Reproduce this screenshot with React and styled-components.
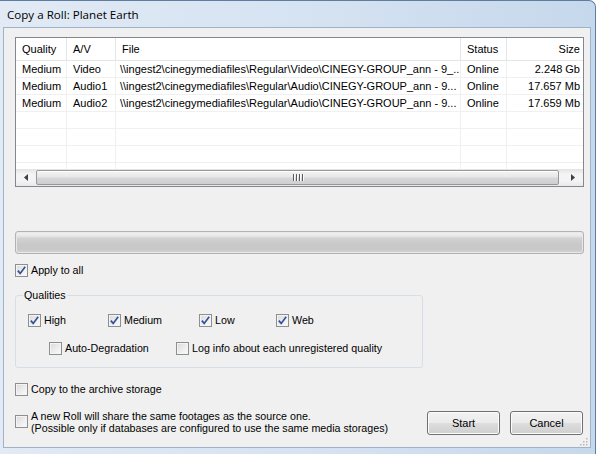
import React from 'react';
import styled, { createGlobalStyle } from 'styled-components';

const GlobalStyle = createGlobalStyle`
  html, body {
    margin: 0;
    padding: 0;
    background: #ffffff;
  }
  body {
    font-family: "Liberation Sans", Arial, sans-serif;
    font-size: 10.7px;
    color: #000;
  }
`;

const files = [
  {
    quality: 'Medium',
    av: 'Video',
    file: '\\\\ingest2\\cinegymediafiles\\Regular\\Video\\CINEGY-GROUP_ann - 9_...',
    status: 'Online',
    size: '2.248 Gb',
  },
  {
    quality: 'Medium',
    av: 'Audio1',
    file: '\\\\ingest2\\cinegymediafiles\\Regular\\Audio\\CINEGY-GROUP_ann - 9...',
    status: 'Online',
    size: '17.657 Mb',
  },
  {
    quality: 'Medium',
    av: 'Audio2',
    file: '\\\\ingest2\\cinegymediafiles\\Regular\\Audio\\CINEGY-GROUP_ann - 9...',
    status: 'Online',
    size: '17.659 Mb',
  },
];

const columns = '51px 49px 345px 46px 76px';

const CheckBox = ({ checked }) => (
  <Box>
    {checked && (
      <svg width="9" height="9" viewBox="0 0 9 9">
        <path
          d="M0.8 4.6 L3.2 7.4 L8.2 0.8"
          fill="none"
          stroke="#33519b"
          strokeWidth="1.7"
        />
      </svg>
    )}
  </Box>
);

const Check = ({ checked, children }) => (
  <CheckRow>
    <CheckBox checked={checked} />
    <CheckLabel>{children}</CheckLabel>
  </CheckRow>
);

const App = () => {
  const emptyRows = [0, 1, 2, 3];

  return (
    <>
      <GlobalStyle />
      <Window>
        <TitleBar>Copy a Roll: Planet Earth</TitleBar>
        <Panel>
          <ListView>
            <HeaderRow>
              <HeadCell>Quality</HeadCell>
              <HeadCell>A/V</HeadCell>
              <HeadCell>File</HeadCell>
              <HeadCell>Status</HeadCell>
              <HeadCell $right>Size</HeadCell>
            </HeaderRow>
            <Body>
              {files.map((f, i) => (
                <Row key={i}>
                  <Cell>{f.quality}</Cell>
                  <Cell>{f.av}</Cell>
                  <Cell>{f.file}</Cell>
                  <Cell>{f.status}</Cell>
                  <Cell $right>{f.size}</Cell>
                </Row>
              ))}
              {emptyRows.map((i) => (
                <Row key={'e' + i}>
                  <Cell />
                  <Cell />
                  <Cell />
                  <Cell />
                  <Cell />
                </Row>
              ))}
            </Body>
            <ScrollBar>
              <ArrowButton>
                <svg width="4" height="7" viewBox="0 0 4 7">
                  <path d="M4 0 L0 3.5 L4 7 Z" fill="#404040" />
                </svg>
              </ArrowButton>
              <Thumb>
                <Grip>
                  <span />
                  <span />
                  <span />
                  <span />
                </Grip>
              </Thumb>
              <ArrowButton>
                <svg width="4" height="7" viewBox="0 0 4 7">
                  <path d="M0 0 L4 3.5 L0 7 Z" fill="#404040" />
                </svg>
              </ArrowButton>
            </ScrollBar>
          </ListView>

          <Progress />

          <ApplyRow>
            <Check checked>Apply to all</Check>
          </ApplyRow>

          <GroupBox>
            <Legend>Qualities</Legend>
            <QualityGrid>
              <Check checked>High</Check>
              <Check checked>Medium</Check>
              <Check checked>Low</Check>
              <Check checked>Web</Check>
            </QualityGrid>
            <OptionGrid>
              <Check>Auto-Degradation</Check>
              <Check>Log info about each unregistered quality</Check>
            </OptionGrid>
          </GroupBox>

          <ArchiveRow>
            <Check>Copy to the archive storage</Check>
          </ArchiveRow>

          <Footer>
            <ShareRow>
              <CheckBox />
              <ShareText>
                A new Roll will share the same footages as the source one.
                <br />
                (Possible only if databases are configured to use the same media storages)
              </ShareText>
            </ShareRow>
            <Buttons>
              <Button>Start</Button>
              <Button>Cancel</Button>
            </Buttons>
          </Footer>
          <Grips>
            <svg width="8" height="8" viewBox="0 0 8 8">
              <rect x="6" y="0" width="1.5" height="1.5" fill="#b8b8b8" />
              <rect x="3" y="3" width="1.5" height="1.5" fill="#b8b8b8" />
              <rect x="6" y="3" width="1.5" height="1.5" fill="#b8b8b8" />
              <rect x="0" y="6" width="1.5" height="1.5" fill="#b8b8b8" />
              <rect x="3" y="6" width="1.5" height="1.5" fill="#b8b8b8" />
              <rect x="6" y="6" width="1.5" height="1.5" fill="#b8b8b8" />
            </svg>
          </Grips>
        </Panel>
      </Window>
    </>
  );
};

const Window = styled.div`
  width: 596px;
  height: 460px;
  box-sizing: border-box;
  display: flex;
  flex-direction: column;
  padding: 0 3px 6px 3px;
  border: 1px solid #5f7e9f;
  border-left: none;
  border-radius: 0 7px 0 0;
  background: linear-gradient(to right, #e1eaf5 0%, #d6e3f2 50%, #c6d8ec 100%);
  overflow: hidden;
`;

const TitleBar = styled.div`
  height: 26px;
  flex-shrink: 0;
  display: flex;
  align-items: center;
  padding-left: 4px;
  padding-top: 1px;
  box-sizing: border-box;
  font-family: "Open Sans", "Liberation Sans", sans-serif;
  font-size: 11.6px;
  color: #000;
`;

const Panel = styled.div`
  position: relative;
  width: 588px;
  height: 421px;
  box-sizing: border-box;
  background: #f0f0f0;
  border: 1px solid #9fb2c8;
  padding: 9px 7px 0 11px;
  display: flex;
  flex-direction: column;
`;

const ListView = styled.div`
  width: 569px;
  height: 150px;
  box-sizing: border-box;
  border: 1px solid #828790;
  background: #fff;
  display: flex;
  flex-direction: column;
  font-size: 11px;
`;

const HeaderRow = styled.div`
  display: grid;
  grid-template-columns: ${columns};
  height: 23px;
  box-sizing: border-box;
  border-bottom: 1px solid #e5e5e5;
`;

const HeadCell = styled.div`
  border-right: 1px solid #e5e5e5;
  padding: 0 ${(p) => (p.$right ? '3px' : '6px')};
  display: flex;
  align-items: center;
  justify-content: ${(p) => (p.$right ? 'flex-end' : 'flex-start')};
  &:last-child {
    border-right: none;
  }
`;

const Body = styled.div`
  flex: 1;
  overflow: hidden;
`;

const Row = styled.div`
  display: grid;
  grid-template-columns: ${columns};
  height: 17px;
  box-sizing: border-box;
  border-bottom: 1px solid #f0f0f0;
`;

const Cell = styled.div`
  border-right: 1px solid #f0f0f0;
  padding: 0 ${(p) => (p.$right ? '3px' : '6px')} 0 ${(p) => (p.$right ? '0' : '6px')};
  line-height: 16px;
  white-space: nowrap;
  overflow: hidden;
  text-align: ${(p) => (p.$right ? 'right' : 'left')};
  &:nth-child(3) {
    padding-left: 4px;
  }
  &:last-child {
    border-right: none;
  }
`;

const ScrollBar = styled.div`
  height: 17px;
  flex-shrink: 0;
  display: flex;
  align-items: center;
  background: linear-gradient(to bottom, #e3e3e3, #f4f4f4 30%, #f4f4f4 70%, #e8e8e8);
`;

const ArrowButton = styled.div`
  width: 20px;
  height: 17px;
  flex-shrink: 0;
  display: flex;
  align-items: center;
  justify-content: center;
`;

const Thumb = styled.div`
  flex: 1;
  height: 15px;
  margin: 0 4px 0 0;
  box-sizing: border-box;
  border: 1px solid #979797;
  border-radius: 2px;
  background: linear-gradient(to bottom, #f3f3f3 0%, #e8e8e8 45%, #d6d6d6 55%, #cfcfcf 100%);
  box-shadow: inset 0 1px 0 #fff;
  display: flex;
  align-items: center;
  justify-content: center;
`;

const Grip = styled.div`
  display: flex;
  gap: 1px;
  span {
    width: 1px;
    height: 7px;
    background: #5a5a5a;
    box-shadow: 1px 0 0 #fafafa;
  }
  span + span {
    margin-left: 1px;
  }
`;

const Progress = styled.div`
  margin-top: 44px;
  width: 569px;
  height: 23px;
  box-sizing: border-box;
  border: 1px solid #b2b2b2;
  border-radius: 3px;
  background: linear-gradient(
    to bottom,
    #f3f3f3 0%,
    #e6e6e6 20%,
    #d2d2d2 30%,
    #c8c8c8 60%,
    #c9c9c9 85%,
    #d9d9d9 100%
  );
  box-shadow: inset 0 0 0 1px #e8e8e8;
`;

const ApplyRow = styled.div`
  margin-top: 10px;
`;

const CheckRow = styled.label`
  display: flex;
  align-items: center;
  gap: 3px;
  height: 13px;
  white-space: nowrap;
`;

const Box = styled.span`
  width: 13px;
  height: 13px;
  flex-shrink: 0;
  box-sizing: border-box;
  border: 1px solid #8e8f8f;
  background: linear-gradient(135deg, #d9d9d9 0%, #ececec 50%, #fbfbfb 100%);
  box-shadow: inset 0 0 0 1px #f4f4f4;
  display: flex;
  align-items: center;
  justify-content: center;
`;

const CheckLabel = styled.span`
  line-height: 13px;
`;

const GroupBox = styled.fieldset`
  margin: 12px 0 0 0;
  width: 408px;
  height: 79px;
  box-sizing: border-box;
  border: 1px solid #d5dfe5;
  border-radius: 3px;
  padding: 12px 0 0 12px;
`;

const Legend = styled.legend`
  padding: 0 1px;
  margin-left: -5px;
  line-height: 13px;
`;

const QualityGrid = styled.div`
  display: grid;
  grid-template-columns: 80px 91px 77px auto;
`;

const OptionGrid = styled.div`
  display: grid;
  grid-template-columns: 127px auto;
  margin: 15px 0 0 21px;
`;

const ArchiveRow = styled.div`
  margin-top: 15px;
`;

const Footer = styled.div`
  margin-top: 16px;
  display: flex;
  align-items: center;
  justify-content: space-between;
`;

const ShareRow = styled.div`
  display: flex;
  align-items: flex-start;
  gap: 3px;
  padding-top: 2px;
`;

const ShareText = styled.div`
  line-height: 12px;
  margin-top: -5px;
`;

const Buttons = styled.div`
  display: flex;
  gap: 10px;
  margin-top: -1px;
`;

const Button = styled.button`
  width: 73px;
  height: 24px;
  box-sizing: border-box;
  border: 1px solid #707070;
  border-radius: 3px;
  background: linear-gradient(to bottom, #f2f2f2 0%, #ebebeb 48%, #dddddd 52%, #cfcfcf 100%);
  box-shadow: inset 0 0 0 1px #fcfcfc;
  font-family: "Liberation Sans", Arial, sans-serif;
  font-size: 11px;
  color: #000;
  padding: 0;
`;

const Grips = styled.div`
  position: absolute;
  right: 2px;
  bottom: 1px;
  display: flex;
`;

export default App;
